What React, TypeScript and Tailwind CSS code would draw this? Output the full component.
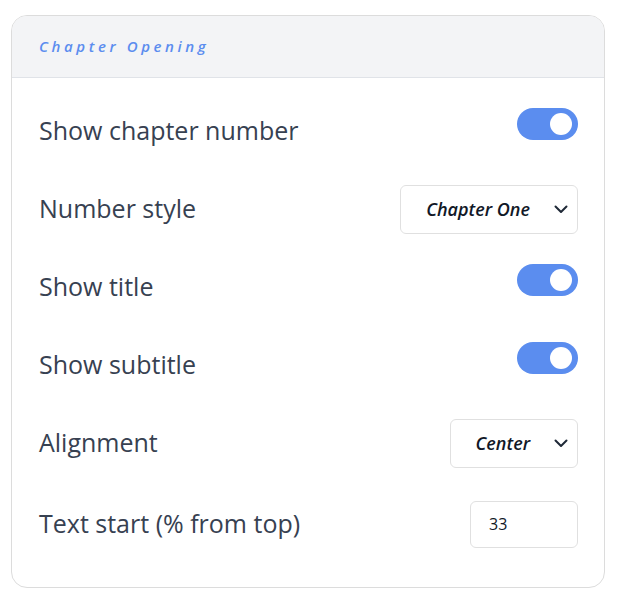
import React from "react";

const Toggle = () => (
  <div className="mb-[14px] flex h-8 w-[61px] items-center justify-end rounded-full bg-[#5b8def] pr-[6px]">
    <div className="h-[22px] w-[22px] rounded-full bg-white" />
  </div>
);

const Chevron = () => (
  <svg width="16" height="16" viewBox="0 0 16 16" fill="none" className="text-[#1f2937]">
    <path d="M2.5 5.5 8 11l5.5-5.5" stroke="currentColor" strokeWidth="2" strokeLinecap="round" strokeLinejoin="round" />
  </svg>
);

const Select = ({ value }: { value: string }) => (
  <div className="flex h-[49px] items-center rounded-md border border-[#e0e0e0] bg-white pl-[25px] pr-[8px]">
    <span className="text-[18px] font-semibold italic text-[#111827]">{value}</span>
    <span className="ml-[23px]">
      <Chevron />
    </span>
  </div>
);

const Row = ({ label, children, className = "" }: { label: string; children: React.ReactNode; className?: string }) => (
  <div className={`flex h-[78px] items-center justify-between ${className}`}>
    <span className="text-[25px] text-[#374151]">{label}</span>
    {children}
  </div>
);

export default function App() {
  return (
    <div className="min-h-screen bg-white pl-[11px] pt-[15px]" style={{ fontFamily: '"Open Sans", "Noto Sans", sans-serif' }}>
      <div className="w-[594px] overflow-hidden rounded-2xl border border-[#dcdcdc]">
        <div className="flex h-[62px] items-center border-b border-[#e0e3e8] bg-[#f3f4f6] pl-[27px]">
          <span className="text-[15px] font-semibold italic tracking-[0.24em] text-[#5b8def]">Chapter Opening</span>
        </div>
        <div className="pb-[24px] pl-[27px] pr-[26px] pt-[14px]">
          <Row label="Show chapter number">
            <Toggle />
          </Row>
          <Row label="Number style">
            <Select value="Chapter One" />
          </Row>
          <Row label="Show title">
            <Toggle />
          </Row>
          <Row label="Show subtitle">
            <Toggle />
          </Row>
          <Row label="Alignment">
            <Select value="Center" />
          </Row>
          <Row label="Text start (% from top)" className="mt-[3px]">
            <div className="flex h-[47px] w-[108px] items-center rounded-md border border-[#e0e0e0] bg-white pl-[18px]">
              <span className="text-[16px] text-[#111827]">33</span>
            </div>
          </Row>
        </div>
      </div>
    </div>
  );
}
